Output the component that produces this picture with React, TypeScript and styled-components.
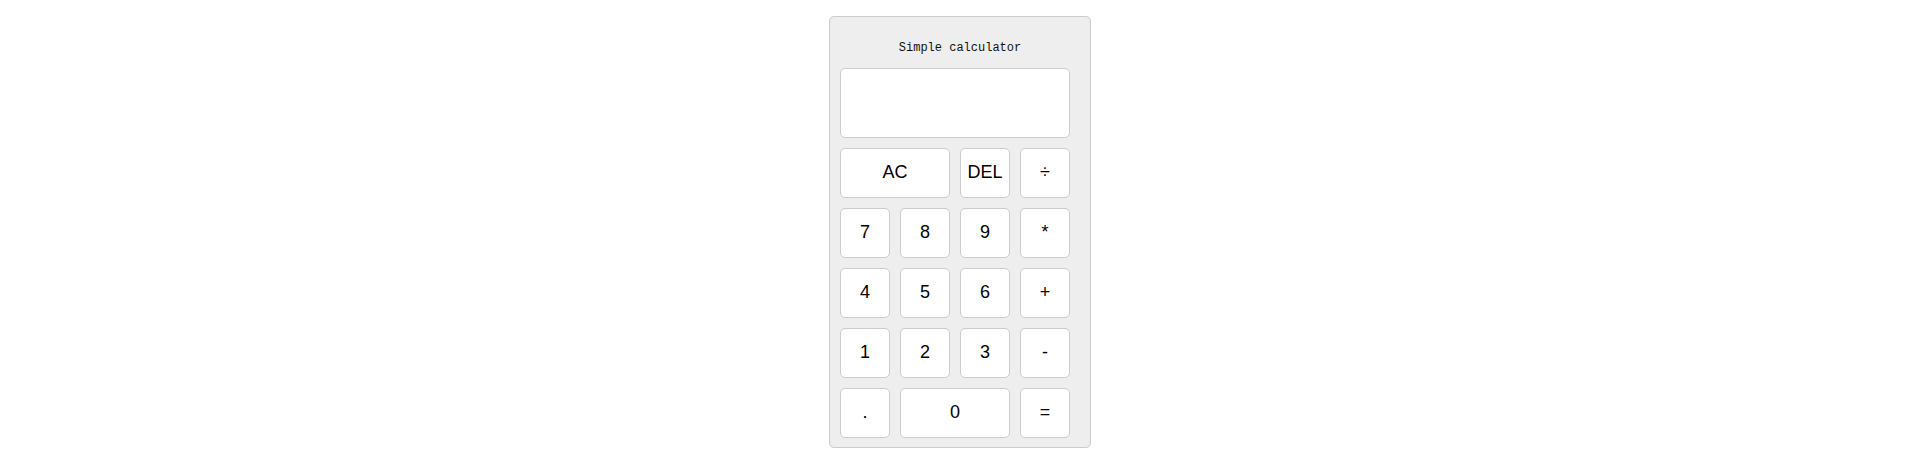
import styled, { createGlobalStyle } from 'styled-components';

const GlobalStyle = createGlobalStyle`
  body {
    margin: 0;
    background: #fff;
    font-family: 'Liberation Sans', Arial, sans-serif;
  }
`;

const Page = styled.div`
  display: flex;
  justify-content: center;
  padding-top: 16px;
`;

const Calculator = styled.div`
  width: 230px;
  padding: 10px 20px 9px 10px;
  background: #eeeeee;
  border: 1px solid #cccccc;
  border-radius: 5px;
`;

const Title = styled.div`
  margin: 11px 0 10px 10px;
  line-height: 20px;
  text-align: center;
  font-family: 'Liberation Mono', 'DejaVu Sans Mono', monospace;
  font-size: 12px;
  color: #111;
`;

const Display = styled.div`
  box-sizing: border-box;
  height: 70px;
  margin-bottom: 10px;
  background: #fff;
  border: 1px solid #cccccc;
  border-radius: 5px;
`;

const Keys = styled.div`
  display: grid;
  grid-template-columns: repeat(4, 50px);
  grid-auto-rows: 50px;
  gap: 10px;
`;

const Key = styled.button<{ $wide?: boolean }>`
  grid-column: ${(p) => (p.$wide ? 'span 2' : 'span 1')};
  display: flex;
  align-items: center;
  justify-content: center;
  padding: 0 0 1px;
  background: #fff;
  border: 1px solid #cccccc;
  border-radius: 5px;
  font-family: 'Liberation Sans', Arial, sans-serif;
  font-size: 18px;
  color: #000;
  cursor: pointer;
`;

const keys: { label: string; wide?: boolean }[] = [
  { label: 'AC', wide: true },
  { label: 'DEL' },
  { label: '÷' },
  { label: '7' },
  { label: '8' },
  { label: '9' },
  { label: '*' },
  { label: '4' },
  { label: '5' },
  { label: '6' },
  { label: '+' },
  { label: '1' },
  { label: '2' },
  { label: '3' },
  { label: '-' },
  { label: '.' },
  { label: '0', wide: true },
  { label: '=' },
];

export default function App() {
  return (
    <>
      <GlobalStyle />
      <Page>
        <Calculator>
          <Title>Simple calculator</Title>
          <Display />
          <Keys>
            {keys.map((k) => (
              <Key key={k.label} $wide={k.wide}>
                {k.label}
              </Key>
            ))}
          </Keys>
        </Calculator>
      </Page>
    </>
  );
}
